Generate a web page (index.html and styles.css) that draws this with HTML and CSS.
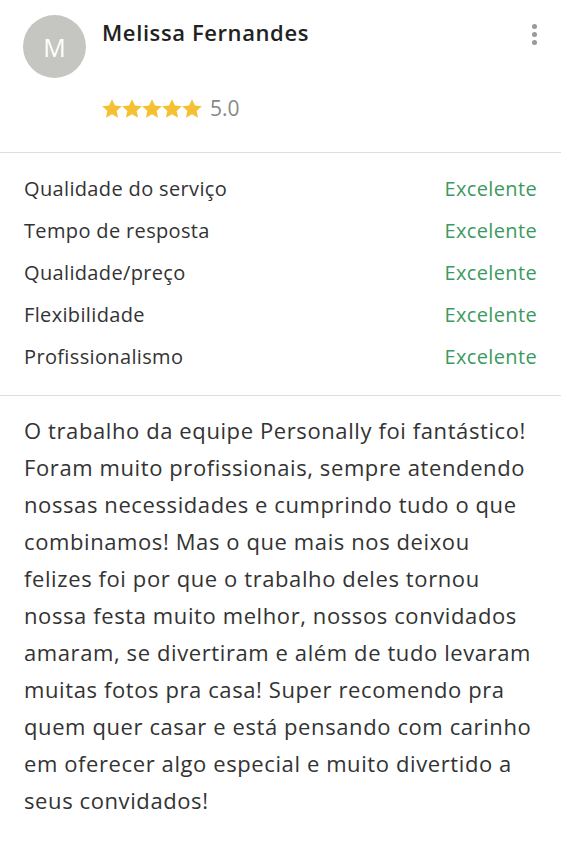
FILE: index.html
```html
<!DOCTYPE html>
<html lang="pt">
<head>
    <meta charset="UTF-8">
    <title>Avaliação</title>
    <link rel="stylesheet" href="styles.css">
</head>
<body>

<div class="review">
    <div class="review-head">
        <div class="avatar">M</div>
        <div class="author">
            <div class="author-name">Melissa Fernandes</div>
            <div class="rating">
                <span class="stars">
                    <svg viewBox="1.5 1.5 21 20"><path d="M12 1.8l3.1 6.6 7.2.8-5.4 4.9 1.5 7.1L12 17.6l-6.4 3.6 1.5-7.1-5.4-4.9 7.2-.8z"/></svg>
                    <svg viewBox="1.5 1.5 21 20"><path d="M12 1.8l3.1 6.6 7.2.8-5.4 4.9 1.5 7.1L12 17.6l-6.4 3.6 1.5-7.1-5.4-4.9 7.2-.8z"/></svg>
                    <svg viewBox="1.5 1.5 21 20"><path d="M12 1.8l3.1 6.6 7.2.8-5.4 4.9 1.5 7.1L12 17.6l-6.4 3.6 1.5-7.1-5.4-4.9 7.2-.8z"/></svg>
                    <svg viewBox="1.5 1.5 21 20"><path d="M12 1.8l3.1 6.6 7.2.8-5.4 4.9 1.5 7.1L12 17.6l-6.4 3.6 1.5-7.1-5.4-4.9 7.2-.8z"/></svg>
                    <svg viewBox="1.5 1.5 21 20"><path d="M12 1.8l3.1 6.6 7.2.8-5.4 4.9 1.5 7.1L12 17.6l-6.4 3.6 1.5-7.1-5.4-4.9 7.2-.8z"/></svg>
                </span>
                <span class="score">5.0</span>
            </div>
        </div>
        <div class="menu-dots">
            <span></span><span></span><span></span>
        </div>
    </div>

    <div class="criteria">
        <div class="criteria-row"><span>Qualidade do serviço</span><span class="grade">Excelente</span></div>
        <div class="criteria-row"><span>Tempo de resposta</span><span class="grade">Excelente</span></div>
        <div class="criteria-row"><span>Qualidade/preço</span><span class="grade">Excelente</span></div>
        <div class="criteria-row"><span>Flexibilidade</span><span class="grade">Excelente</span></div>
        <div class="criteria-row"><span>Profissionalismo</span><span class="grade">Excelente</span></div>
    </div>

    <p class="review-text">
        O trabalho da equipe Personally foi fantástico!<br>
        Foram muito profissionais, sempre atendendo<br>
        nossas necessidades e cumprindo tudo o que<br>
        combinamos! Mas o que mais nos deixou<br>
        felizes foi por que o trabalho deles tornou<br>
        nossa festa muito melhor, nossos convidados<br>
        amaram, se divertiram e além de tudo levaram<br>
        muitas fotos pra casa! Super recomendo pra<br>
        quem quer casar e está pensando com carinho<br>
        em oferecer algo especial e muito divertido a<br>
        seus convidados!
    </p>
</div>

</body>
</html>
```

FILE: styles.css
```css
body {
    font-family: "Open Sans", sans-serif;
    background: #fff;
    color: #333;
    margin: 0;
}

.review-head {
    display: flex;
    align-items: flex-start;
    padding: 15px 24px 0 23px;
    height: 137px;
    border-bottom: 1px solid #ddd;
}

.avatar {
    width: 63px;
    height: 63px;
    border-radius: 50%;
    background: #c5c6c1;
    color: #fff;
    font-size: 25px;
    display: flex;
    align-items: center;
    justify-content: center;
    flex-shrink: 0;
}

.author {
    flex: 1;
    margin-left: 16px;
}

.author-name {
    font-size: 22px;
    font-weight: 600;
    letter-spacing: 0.6px;
    color: #222;
    line-height: 34px;
}

.rating {
    display: flex;
    align-items: center;
    margin-top: 45px;
}

.stars {
    display: flex;
}

.stars svg {
    width: 20px;
    height: 19px;
    fill: #f5c133;
}

.score {
    font-size: 21px;
    color: #888;
    margin-left: 8px;
}

.menu-dots {
    display: flex;
    flex-direction: column;
    gap: 3px;
    margin-top: 9px;
}

.menu-dots span {
    width: 5px;
    height: 5px;
    border-radius: 50%;
    background: #999;
}

.criteria {
    padding: 15px 24px 17px 24px;
    border-bottom: 1px solid #ddd;
}

.criteria-row {
    display: flex;
    justify-content: space-between;
    font-size: 20px;
    letter-spacing: 0.35px;
    line-height: 42px;
}

.grade {
    color: #3d9a5e;
}

.review-text {
    margin: 0;
    padding: 16px 24px;
    font-size: 22px;
    letter-spacing: 0.6px;
    line-height: 37px;
    color: #333;
}
```
